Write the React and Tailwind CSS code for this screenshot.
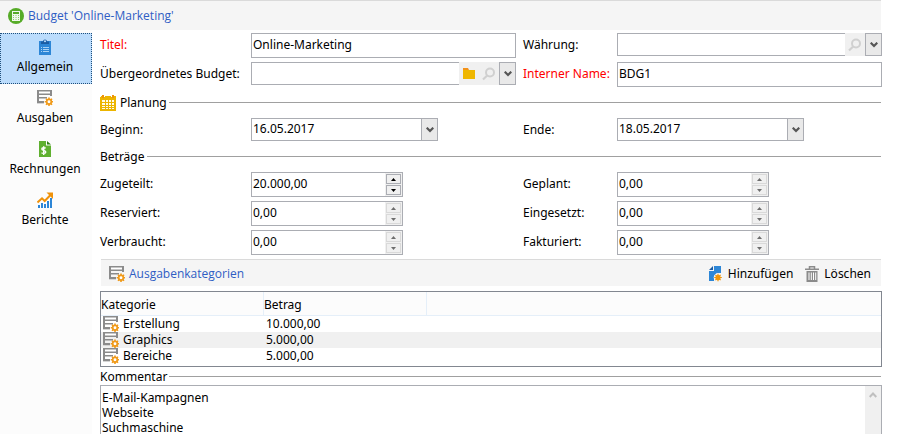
import React from "react";

function CalculatorBadge() {
  return (
    <svg width="16" height="16" viewBox="0 0 16 16" aria-hidden="true">
      <circle cx="8" cy="8" r="8" fill="#56ab27" />
      <rect x="4" y="3" width="8" height="10" fill="#f0f8eb" />
      <rect x="5" y="4" width="6" height="2" fill="#56ab27" />
      <g fill="#8cc76b">
        <path d="M5 7h1v1H5zM7.5 7h1v1h-1zM10 7h1v1h-1zM5 9h1v1H5zM7.5 9h1v1h-1zM10 9h1v1h-1zM5 11h1v1H5zM7.5 11h1v1h-1zM10 11h1v1h-1z" />
      </g>
    </svg>
  );
}

function ClipboardIcon() {
  return (
    <svg width="12" height="16" viewBox="0 0 12 16" aria-hidden="true">
      <rect x="0" y="2" width="12" height="14" fill="#2d86d6" />
      <path d="M2 2.500h2a2 2 0 0 1 4 0h2V5H2z" fill="#1c5da3" />
      <circle cx="6" cy="2.200" r="1" fill="#bfdfff" />
      <path d="M2 8h1v1H2zM4 8h6v1H4zM2 10h1v1H2zM4 10h6v1H4zM2 12h1v1H2zM4 12h6v1H4z" fill="#a9d2f5" />
    </svg>
  );
}

function ListGearIcon() {
  return (
    <svg width="16" height="16" viewBox="0 0 16 16" className="shrink-0" aria-hidden="true">
      <path d="M0 0h15v6h-2V5H2v2h8v1.500H2V11h5v2H0z" fill="#8b8b8b" />
      <rect x="2" y="1.500" width="11" height="2" fill="#fff" />
      <rect x="0" y="13" width="7" height="1" fill="#d5d5d5" />
      <g stroke="#f09a1a" strokeWidth="1.600">
        <path d="M12 7.500v8.500M7.750 11.750h8.500M9 8.750l6 6M15 8.750l-6 6" />
      </g>
      <circle cx="12" cy="11.750" r="2.300" fill="#fff" stroke="#f09a1a" strokeWidth="1.700" />
    </svg>
  );
}

function InvoiceIcon() {
  return (
    <svg width="12" height="16" viewBox="0 0 12 16" aria-hidden="true">
      <path d="M0 0h7v4.500h5V16H0z" fill="#5fb030" />
      <path d="M8 0l4 3.500H8z" fill="#2f7d15" />
      <path
        d="M6.700 7.300C6 6.700 2.800 6.300 2.800 8c0 1.800 4 1.100 4 3 0 1.900-3.300 1.500-4.300.700M4.700 5.300v8.700"
        fill="none"
        stroke="#fff"
        strokeWidth="1.400"
      />
    </svg>
  );
}

function ChartIcon() {
  return (
    <svg width="16" height="16" viewBox="0 0 16 16" aria-hidden="true">
      <path d="M1 13h2v3H1zM4 11h2v5H4zM7 12h2v4H7zM10 9h2v7h-2zM13 6h2v10h-2z" fill="#2d86d6" />
      <path d="M0.500 10.500L5 6.300l2.700 2.700L13.500 3" fill="none" stroke="#ef920b" strokeWidth="2" />
      <path d="M9.500 0.500H16V7z" fill="#ef920b" />
    </svg>
  );
}

function CalendarIcon() {
  return (
    <svg width="16" height="16" viewBox="0 0 16 16" aria-hidden="true">
      <path d="M0 1h16v15H0z" fill="#ecb500" />
      <path d="M2 0h2v3H2zM12 0h2v3h-2z" fill="#ef920b" />
      <path d="M4 0h1v2H4zM11 0h1v2h-1zM0 1h1v1H0z" fill="#fff" />
      <path
        d="M2 5h3v2H2zM6 5h2v2H6zM9 5h2v2H9zM12 5h2v2h-2zM2 8h3v2H2zM6 8h2v2H6zM9 8h2v2H9zM12 8h2v2h-2zM2 11h3v1H2zM6 11h2v1H6zM9 11h2v1H9zM12 11h2v1h-2zM2 13h3v1H2zM6 13h2v1H6zM9 13h2v1H9zM12 13h2v1h-2z"
        fill="#fffbe8"
      />
    </svg>
  );
}

function FolderIcon() {
  return (
    <svg width="12" height="12" viewBox="0 0 12 12" aria-hidden="true">
      <path d="M0 0h5l1 2H0z" fill="#f3921a" />
      <path d="M0 2h12v9H0z" fill="#efb700" />
    </svg>
  );
}

function SearchIcon() {
  return (
    <svg width="14" height="14" viewBox="0 0 14 14" aria-hidden="true">
      <circle cx="8" cy="5.500" r="4" fill="none" stroke="#d0d0d0" strokeWidth="2" />
      <path d="M5.200 8.500L1 12.500" stroke="#d0d0d0" strokeWidth="2.200" />
    </svg>
  );
}

function ChevronIcon() {
  return (
    <svg width="8" height="6" viewBox="0 0 8 6" aria-hidden="true">
      <path d="M0.700 0.700L4 4l3.300-3.300" fill="none" stroke="#555" strokeWidth="2.200" />
    </svg>
  );
}

function NewPageIcon() {
  return (
    <svg width="13" height="16" viewBox="0 0 13 16" aria-hidden="true">
      <path d="M5 0h7v7H8L5 10v5H0V5h5z" fill="#2d86d6" />
      <path d="M4 0v4H0z" fill="#1c5da3" />
      <circle cx="9" cy="11.500" r="4.300" fill="#f5f5f5" />
      <circle cx="9" cy="11.500" r="2.600" fill="#f09508" />
      <path d="M9 7.700v7.600M5.200 11.500h7.600M6.400 8.900l5.200 5.200M11.600 8.900l-5.200 5.200" stroke="#f09508" strokeWidth="1.200" />
    </svg>
  );
}

function TrashIcon() {
  return (
    <svg width="14" height="16" viewBox="0 0 14 16" aria-hidden="true">
      <path d="M4.500 3V0.700h5V3M0 3.200h14" fill="none" stroke="#8b8b8b" strokeWidth="1.500" />
      <path d="M1.500 5h11v11h-11z" fill="#8b8b8b" />
      <path d="M3.500 6.500h1V14h-1zM5.800 6.500h1V14h-1zM8 6.500h1V14H8zM10.200 6.500h1V14h-1z" fill="#fff" />
    </svg>
  );
}

const sections = [
  { name: "Allgemein", Icon: ClipboardIcon, active: true },
  { name: "Ausgaben", Icon: ListGearIcon },
  { name: "Rechnungen", Icon: InvoiceIcon },
  { name: "Berichte", Icon: ChartIcon },
];

const amounts = [
  { id: "zugeteilt", label: "Zugeteilt:", value: "20.000,00", editable: true },
  { id: "geplant", label: "Geplant:", value: "0,00" },
  { id: "reserviert", label: "Reserviert:", value: "0,00" },
  { id: "eingesetzt", label: "Eingesetzt:", value: "0,00" },
  { id: "verbraucht", label: "Verbraucht:", value: "0,00" },
  { id: "fakturiert", label: "Fakturiert:", value: "0,00" },
];

const categories = [
  { name: "Erstellung", amount: "10.000,00" },
  { name: "Graphics", amount: "5.000,00" },
  { name: "Bereiche", amount: "5.000,00" },
];

const grid = "grid grid-cols-[151px_1fr_101px_1fr] items-start";

function Label({ htmlFor, second, required, children }) {
  return (
    <label
      htmlFor={htmlFor}
      className={`h-[23px] whitespace-nowrap leading-[23px] ${second ? "pl-[7px]" : ""} ${required ? "text-[#f00]" : ""}`}
    >
      {children}
    </label>
  );
}

function TextField({ id, value }) {
  return (
    <input
      id={id}
      defaultValue={value}
      className="h-[25px] w-full border border-[#abadb3] bg-white px-px pb-[2px] outline-none"
    />
  );
}

function DropButton({ label }) {
  return (
    <button
      type="button"
      aria-label={label}
      className="flex w-[17px] shrink-0 items-center justify-center border border-[#abadb3] bg-[#e9e9e9]"
    >
      <ChevronIcon />
    </button>
  );
}

function Lookup({ id, folder }) {
  return (
    <div className="flex h-[23px]">
      <input
        id={id}
        className="min-w-0 flex-1 border border-r-0 border-[#abadb3] bg-white px-[2px] outline-none"
      />
      {folder && (
        <button type="button" aria-label="Ordner" className="flex w-5 items-center justify-center bg-[#f0f0f0]">
          <FolderIcon />
        </button>
      )}
      <button type="button" aria-label="Suchen" className="flex w-5 items-center justify-center bg-[#f0f0f0]">
        <SearchIcon />
      </button>
      <DropButton label="Liste öffnen" />
    </div>
  );
}

function DateField({ id, value }) {
  return (
    <div className="flex h-[23px] w-[187px]">
      <input
        id={id}
        defaultValue={value}
        className="min-w-0 flex-1 border border-r-0 border-[#abadb3] bg-white px-px pb-[2px] outline-none"
      />
      <DropButton label="Kalender öffnen" />
    </div>
  );
}

function SpinField({ id, value, editable }) {
  const button = editable
    ? "border-[#abadb3] text-black"
    : "border-[#d9d9d9] text-[#6d6d6d]";
  return (
    <div className="flex h-[25px] w-[152px] border border-[#abadb3]">
      <input
        id={id}
        defaultValue={value}
        readOnly={!editable}
        className="min-w-0 flex-1 bg-white px-px pb-[2px] outline-none"
      />
      <div className="flex w-[17px] flex-col gap-px bg-[#f0f0f0] p-px">
        <button type="button" aria-label="Erhöhen" className={`flex flex-1 items-center justify-center border bg-[#f0f0f0] ${button}`}>
          <svg width="5" height="3" viewBox="0 0 5 3" aria-hidden="true">
            <path d="M0 3L2.500 0 5 3z" fill="currentColor" />
          </svg>
        </button>
        <button type="button" aria-label="Verringern" className={`flex flex-1 items-center justify-center border bg-[#f0f0f0] ${button}`}>
          <svg width="5" height="3" viewBox="0 0 5 3" aria-hidden="true">
            <path d="M0 0L2.500 3 5 0z" fill="currentColor" />
          </svg>
        </button>
      </div>
    </div>
  );
}

function GroupTitle({ icon, children }) {
  return (
    <h2 className="flex h-4 items-center">
      {icon && <span className="mr-1">{icon}</span>}
      {children}
      <span className="mb-[2px] ml-[2px] mr-px h-px flex-1 bg-[#a0a0a0]" />
    </h2>
  );
}

export default function App() {
  return (
    <div className="flex h-screen flex-col overflow-hidden bg-white pr-8 font-['Noto_Sans','Open_Sans',sans-serif] text-[12px] leading-4 text-black">
      <header className="mr-px flex h-[30px] shrink-0 items-center gap-1 border-t border-[#dadada] bg-[#f5f5f5] pl-2 pt-px">
        <CalculatorBadge />
        <h1 className="font-['Open_Sans','Noto_Sans',sans-serif] text-[#2f5dc4]">Budget 'Online-Marketing'</h1>
      </header>

      <div className="flex min-h-0 flex-1">
        <nav className="w-[92px] shrink-0 bg-[#fcfcfc] pt-[3px]">
          {sections.map(({ name, Icon, active }) => (
            <button
              key={name}
              type="button"
              className={`flex h-[51px] w-full flex-col items-center gap-1 border pr-[2px] pt-[5px] ${
                active ? "border-dotted border-[#1f4f7c] bg-[#bbdcfc]" : "border-transparent"
              }`}
            >
              <Icon />
              {name}
            </button>
          ))}
        </nav>

        <main className="flex min-w-0 flex-1 flex-col pl-2 pt-[3px]">
          <div className={`${grid} gap-y-1`}>
            <Label htmlFor="titel" required>Titel:</Label>
            <TextField id="titel" value="Online-Marketing" />
            <Label htmlFor="waehrung" second>Währung:</Label>
            <Lookup id="waehrung" />
            <Label htmlFor="uebergeordnet">Übergeordnetes Budget:</Label>
            <Lookup id="uebergeordnet" folder />
            <Label htmlFor="name" second required>Interner Name:</Label>
            <TextField id="name" value="BDG1" />
          </div>

          <section className="mt-2">
            <GroupTitle icon={<CalendarIcon />}>Planung</GroupTitle>
            <div className={`${grid} mt-[7px]`}>
              <Label htmlFor="beginn">Beginn:</Label>
              <DateField id="beginn" value="16.05.2017" />
              <Label htmlFor="ende" second>Ende:</Label>
              <DateField id="ende" value="18.05.2017" />
            </div>
          </section>

          <section className="mt-2">
            <GroupTitle>Beträge</GroupTitle>
            <div className={`${grid} mt-[7px] gap-y-1`}>
              {amounts.map((a, i) => (
                <React.Fragment key={a.id}>
                  <Label htmlFor={a.id} second={i % 2 === 1}>{a.label}</Label>
                  <SpinField id={a.id} value={a.value} editable={a.editable} />
                </React.Fragment>
              ))}
            </div>
          </section>

          <section className="mt-1">
            <div className="ml-px mr-px flex h-[27px] items-center border-t border-[#dadada] bg-[#f5f5f5] pl-2 pr-[10px] pt-px">
              <ListGearIcon />
              <h2 className="ml-1 font-['Open_Sans','Noto_Sans',sans-serif] text-[#2f5dc4]">Ausgabenkategorien</h2>
              <button type="button" className="ml-auto flex items-center gap-[6px]">
                <NewPageIcon />
                Hinzufügen
              </button>
              <button type="button" className="ml-3 flex items-center gap-[5px]">
                <TrashIcon />
                Löschen
              </button>
            </div>

            <div className="mt-[5px] border border-[#828790] pb-[2px]">
              <table className="w-full table-fixed border-separate border-spacing-0 text-left">
                <thead className="bg-[#fcfcfc]">
                  <tr className="h-6">
                    <th className="w-[163px] border-b border-r border-[#e5eff9] p-0 pt-[3px] font-normal">Kategorie</th>
                    <th className="w-[163px] border-b border-r border-[#e5eff9] p-0 pt-[3px] font-normal">Betrag</th>
                    <th className="border-b border-[#e5eff9] p-0" />
                  </tr>
                </thead>
                <tbody>
                  {categories.map((c) => (
                    <tr key={c.name} className="h-4 even:bg-[#f0f0f0]">
                      <td className="p-0 pl-[2px]">
                        <div className="flex h-4 items-center gap-1">
                          <ListGearIcon />
                          {c.name}
                        </div>
                      </td>
                      <td className="p-0 pl-[2px]">{c.amount}</td>
                      <td className="p-0" />
                    </tr>
                  ))}
                </tbody>
              </table>
            </div>
          </section>

          <section className="mt-[2px] flex min-h-0 flex-1 flex-col">
            <GroupTitle>
              <label htmlFor="kommentar">Kommentar</label>
            </GroupTitle>
            <div className="flex min-h-0 flex-1 border border-b-0 border-[#abadb3]">
              <textarea
                id="kommentar"
                defaultValue={"E-Mail-Kampagnen\nWebseite\nSuchmaschine"}
                className="min-w-0 flex-1 resize-none overflow-hidden px-px pt-1 leading-[15px] outline-none"
              />
              <div className="w-4 bg-[#f0f0f0]">
                <button type="button" aria-label="Nach oben" className="flex h-[18px] w-full items-center justify-center">
                  <svg width="8" height="6" viewBox="0 0 8 6" aria-hidden="true">
                    <path d="M0.700 5L4 1.500 7.300 5" fill="none" stroke="#bfbfbf" strokeWidth="2" />
                  </svg>
                </button>
              </div>
            </div>
          </section>
        </main>
      </div>
    </div>
  );
}
